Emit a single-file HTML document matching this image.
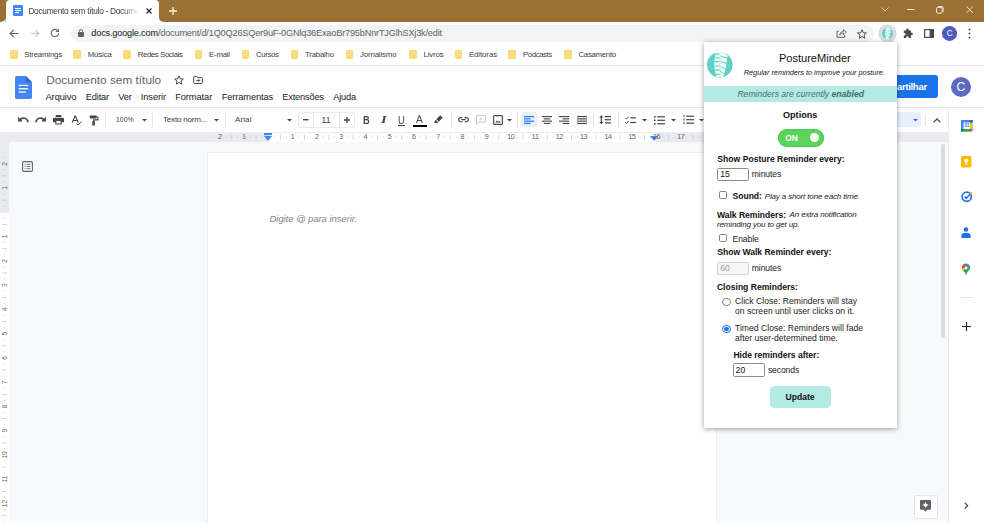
<!DOCTYPE html>
<html lang="pt-BR">
<head>
<meta charset="utf-8">
<title>Documento sem título - Documentos Google</title>
<style>
*{box-sizing:border-box;margin:0;padding:0}
html,body{width:984px;height:523px;overflow:hidden;background:#fff}
body{position:relative;font-family:"Liberation Sans",sans-serif;color:#202124}
.a{position:absolute}
.t{position:absolute;white-space:nowrap;line-height:1}
svg{position:absolute;overflow:visible}
/* chrome frame */
#tabstrip{left:0;top:0;width:984px;height:22px;background:#9a7034}
#tab{left:5.500px;top:0;width:153.500px;height:22px;background:#fff;border-radius:4px 4px 0 0}
#navbar{left:0;top:22px;width:984px;height:22px;background:#fff}
#omni{left:70.500px;top:24.600px;width:803px;height:17.800px;border-radius:9px;background:#f1f3f4}
#bm{left:0;top:44px;width:984px;height:21.500px;background:#fff;border-bottom:1px solid #e3e5e8}
.fold{position:absolute;top:50px;width:7.500px;height:8.800px;background:#f9dd7d;border-radius:1px;margin-left:-.7px}
/* docs */
#dochead{left:0;top:65.500px;width:984px;height:43px;background:#fff}
#doctb{left:0;top:107px;width:984px;height:25px;background:#fff;border-top:1px solid #e3e5e8}
#ruler{left:0;top:132px;width:948px;height:10px;background:#f8f9fa}
#canvas{left:0;top:142px;width:948px;height:381px;background:#f8f9fa}
#page{left:207px;top:151.500px;width:510px;height:380px;background:#fff;border:1px solid #eceef0}
#side{left:948px;top:108px;width:36px;height:415px;background:#fff;border-left:1px solid #e8eaed}
.sep{position:absolute;top:113px;width:1px;height:13.500px;background:#e4e6e9}
/* popup */
#pop{left:704px;top:42.300px;width:193.300px;height:385.400px;background:#fff;box-shadow:0 1px 5px rgba(0,0,0,.38);}
</style>
</head>
<body>
<!-- ===== Browser chrome ===== -->
<div class="a" id="tabstrip"></div>
<div class="a" id="tab"></div>
<svg style="left:0;top:0" width="170" height="22" viewBox="0 0 170 22"><path d="M159 22 V17 Q159 21.700 163.500 21.700 V22 Z M5.500 22 V17 Q5.500 21.700 1 21.700 V22 Z" fill="#fff"/></svg>
<svg style="left:13px;top:5px" width="10" height="11" viewBox="0 0 10 11"><rect width="10" height="11" rx="1.3" fill="#4285f4"/><rect x="2" y="3" width="6" height="1.1" fill="#fff"/><rect x="2" y="5" width="6" height="1.1" fill="#fff"/><rect x="2" y="7" width="4" height="1.1" fill="#fff"/></svg>
<svg style="left:146px;top:8px" width="6" height="6" viewBox="0 0 6 6"><path d="M.5 .5 L5.5 5.5 M5.5 .5 L.5 5.5" stroke="#202124" stroke-width="1.1" fill="none"/></svg>
<svg style="left:169px;top:7px" width="8" height="8" viewBox="0 0 8 8"><path d="M4 0 V8 M0 4 H8" stroke="#fdeed6" stroke-width="1.400" fill="none"/></svg>
<!-- window controls -->
<svg style="left:881px;top:7px" width="8" height="5" viewBox="0 0 8 5"><path d="M.5 .5 L4 4 L7.500 .5" stroke="#d9c7a6" stroke-width="1" fill="none"/></svg>
<svg style="left:906.700px;top:9px" width="7.500" height="2" viewBox="0 0 7.500 2"><path d="M0 .5 H7.500" stroke="#f3eadb" stroke-width="1"/></svg>
<svg style="left:935.600px;top:5.600px" width="7.600" height="7.600" viewBox="0 0 8 8"><rect x=".5" y="1.5" width="6" height="6" rx="1.2" stroke="#f3eadb" fill="none" stroke-width="1"/><path d="M2 .5 H6.300 Q7.500 .5 7.500 1.700 V6" stroke="#f3eadb" fill="none" stroke-width="1"/></svg>
<svg style="left:965.600px;top:6px" width="7.400" height="7.400" viewBox="0 0 8 8"><path d="M.5 .5 L7.500 7.500 M7.500 .5 L.5 7.500" stroke="#f3eadb" stroke-width="1" fill="none"/></svg>

<div class="a" id="navbar"></div>
<div class="a" id="omni"></div>
<!-- nav icons -->
<svg style="left:9px;top:29px" width="10" height="9" viewBox="0 0 10 9"><path d="M9.500 4.500 H1.200 M4.800 .8 L1.100 4.500 L4.800 8.200" stroke="#5f6368" stroke-width="1.1" fill="none"/></svg>
<svg style="left:30px;top:29px" width="10" height="9" viewBox="0 0 10 9"><path d="M.5 4.500 H8.800 M5.200 .8 L8.900 4.500 L5.200 8.200" stroke="#c4c7ca" stroke-width="1.1" fill="none"/></svg>
<svg style="left:50px;top:28px" width="10" height="10" viewBox="0 0 10 10"><path d="M8.600 5.200 A3.700 3.700 0 1 1 7.400 2.300" stroke="#5f6368" stroke-width="1.1" fill="none"/><path d="M9 .6 V3.900 H5.700 Z" fill="#5f6368"/></svg>
<svg style="left:78px;top:29px" width="6" height="8" viewBox="0 0 6 8"><rect x="0" y="3" width="6" height="5" rx=".8" fill="#5f6368"/><path d="M1.300 3.200 V2.300 A1.700 1.700 0 0 1 4.700 2.300 V3.200" stroke="#5f6368" stroke-width="1" fill="none"/></svg>
<!-- share / star -->
<svg style="left:836px;top:28px" width="11" height="10" viewBox="0 0 11 10"><path d="M2.800 3.300 H1 V9.300 H8.600 V7.200" stroke="#5f6368" stroke-width="1" fill="none"/><path d="M3.600 7 Q4 3.600 7.400 3.400 V1.500 L10.300 4.200 L7.400 6.800 V5 Q5 5 3.600 7 Z" stroke="#5f6368" stroke-width=".9" fill="none" stroke-linejoin="round"/></svg>
<svg style="left:857px;top:29px" width="10" height="10" viewBox="0 0 10 10"><path d="M5 .8 L6.300 3.700 L9.400 4 L7.050 6.100 L7.750 9.200 L5 7.550 L2.250 9.200 L2.950 6.100 L.6 4 L3.700 3.700 Z" stroke="#474a4d" stroke-width="1" fill="none" stroke-linejoin="round"/></svg>
<!-- extension (active) -->
<div class="a" style="left:879px;top:25px;width:17px;height:17px;border-radius:50%;background:#dcdddf;box-shadow:0 0 0 .5px #cfd0d2"></div>
<svg style="left:882px;top:28px" width="11" height="11" viewBox="0 0 26 26"><defs><clipPath id="lc2"><circle cx="13" cy="13" r="13"/></clipPath></defs><circle cx="13" cy="13" r="13" fill="#5dd1c6"/><g clip-path="url(#lc2)"><path d="M9.300 0 Q5 13 10 26 L16.300 26 Q20.200 15 20.800 3.500 Q18.500 1 16.500 0 Z" fill="#effcfa"/><path d="M8.300 6 H12.200 M7.600 12 H12.400 M8 18.400 H12.600 M14.200 6 L20.500 8 M14 12.500 L19.500 15.300 M13.200 19 L17.600 22" stroke="#5dd1c6" stroke-width="1.800" fill="none"/></g></svg>
<!-- puzzle -->
<svg style="left:902px;top:28.300px" width="11" height="11" viewBox="0 0 11 11"><path d="M4.200 1.700 A1.250 1.250 0 0 1 6.700 1.700 V2.400 H9 V4.800 H9.600 A1.250 1.250 0 0 1 9.600 7.300 H9 V10 H6.600 V9.300 A1.150 1.150 0 0 0 4.300 9.300 V10 H1.800 V7.400 H2.300 A1.200 1.200 0 0 0 2.300 5 H1.800 V2.400 H4.200 Z" fill="#494c50"/></svg>
<!-- side panel icon -->
<svg style="left:924px;top:29px" width="10" height="9" viewBox="0 0 10 9"><rect x=".6" y=".6" width="8.800" height="7.800" stroke="#494c50" stroke-width="1.200" fill="none"/><rect x="5.600" y=".6" width="3.800" height="7.800" fill="#494c50"/></svg>
<div class="a" style="left:942.400px;top:26px;width:14.600px;height:14.600px;border-radius:50%;background:#5059bc"></div>
<div class="t" style="left:942.200px;top:29.600px;width:15px;text-align:center;font-size:8.200px;color:#fff">C</div>
<svg style="left:968.200px;top:28px" width="3" height="11" viewBox="0 0 3 11"><circle cx="1.500" cy="1.500" r="1" fill="#494c50"/><circle cx="1.500" cy="5.500" r="1" fill="#494c50"/><circle cx="1.500" cy="9.500" r="1" fill="#494c50"/></svg>

<div class="a" id="bm"></div>
<div class="fold" style="left:11px"></div>
<div class="fold" style="left:74px"></div>
<div class="fold" style="left:124px"></div>
<div class="fold" style="left:195.5px"></div>
<div class="fold" style="left:242.5px"></div>
<div class="fold" style="left:291.5px"></div>
<div class="fold" style="left:346.5px"></div>
<div class="fold" style="left:410px"></div>
<div class="fold" style="left:455.5px"></div>
<div class="fold" style="left:509px"></div>
<div class="fold" style="left:565px"></div>
<div class="t" style="left:24.3px;top:50.5px;font-size:7.8px;letter-spacing:-0.183px;color:#3c4043;">Streamings</div>
<div class="t" style="left:87.7px;top:50.5px;font-size:7.8px;letter-spacing:-0.128px;color:#3c4043;">Música</div>
<div class="t" style="left:137.7px;top:50.5px;font-size:7.8px;letter-spacing:-0.388px;color:#3c4043;">Redes Sociais</div>
<div class="t" style="left:209.0px;top:50.5px;font-size:7.8px;letter-spacing:-0.199px;color:#3c4043;">E-mail</div>
<div class="t" style="left:256.0px;top:50.5px;font-size:7.8px;letter-spacing:-0.364px;color:#3c4043;">Cursos</div>
<div class="t" style="left:305.0px;top:50.5px;font-size:7.8px;letter-spacing:-0.198px;color:#3c4043;">Trabalho</div>
<div class="t" style="left:360.0px;top:50.5px;font-size:7.8px;letter-spacing:-0.127px;color:#3c4043;">Jornalismo</div>
<div class="t" style="left:423.5px;top:50.5px;font-size:7.8px;letter-spacing:-0.148px;color:#3c4043;">Livros</div>
<div class="t" style="left:469.0px;top:50.5px;font-size:7.8px;letter-spacing:-0.081px;color:#3c4043;">Editoras</div>
<div class="t" style="left:523.0px;top:50.5px;font-size:7.8px;letter-spacing:-0.410px;color:#3c4043;">Podcasts</div>
<div class="t" style="left:578.5px;top:50.5px;font-size:7.8px;letter-spacing:-0.279px;color:#3c4043;">Casamento</div>
<div class="t" style="left:28.4px;top:6.9px;font-size:8.4px;letter-spacing:-0.316px;color:#3c4043;width:113px;overflow:hidden;-webkit-mask-image:linear-gradient(90deg,#000 84%,transparent 98%);mask-image:linear-gradient(90deg,#000 84%,transparent 98%);">Documento sem título - Docume<span style="letter-spacing:0">ntos Google</span></div>
<div class="t" style="left:91.3px;top:28.9px;font-size:9.2px;letter-spacing:-0.191px;color:#5f6368;"><span style="color:#202124">docs.google.com</span>/document/d/1Q0Q26SQer9uF-0GNlq36ExaoBr795bNnrTJGlhSXj3k/edit</div>

<!-- ===== Docs ===== -->
<div class="a" id="dochead"></div>
<div class="a" id="doctb"></div>
<div class="a" id="ruler"></div>
<div class="a" id="canvas"></div>
<div class="a" id="page"></div>
<div class="a" id="side"></div>
<svg style="left:14.600px;top:75.500px" width="17" height="23" viewBox="0 0 17 23"><path d="M1.800 0 H10.800 L17 6.200 V21.200 Q17 23 15.200 23 H1.800 Q0 23 0 21.200 V1.800 Q0 0 1.800 0 Z" fill="#4285f4"/><path d="M10.800 0 L17 6.200 H12.300 Q10.800 6.200 10.800 4.700 Z" fill="#2b62cf"/><rect x="3.700" y="8.800" width="9.400" height="1.300" fill="#fff"/><rect x="3.700" y="12.100" width="9.400" height="1.300" fill="#fff"/><rect x="3.700" y="15.400" width="7.100" height="1.300" fill="#fff"/></svg>
<svg style="left:174.00px;top:75.30px" width="10" height="10" viewBox="0 0 10 10"><path d="M5 .9 L6.250 3.800 L9.300 4.050 L7 6.100 L7.700 9.100 L5 7.500 L2.300 9.100 L3 6.100 L.7 4.050 L3.750 3.800 Z" stroke="#444746" stroke-width="1" fill="none" stroke-linejoin="round"/></svg>
<svg style="left:192.90px;top:76.20px" width="10" height="8" viewBox="0 0 10 8"><path d="M.6 1.400 Q.6 .6 1.400 .6 H3.800 L4.800 1.700 H8.600 Q9.400 1.700 9.400 2.500 V6.600 Q9.400 7.400 8.600 7.400 H1.400 Q.6 7.400 .6 6.600 Z" stroke="#444746" stroke-width="1" fill="none"/><path d="M3.200 4.500 H6.600 M5.300 3.100 L6.700 4.500 L5.300 5.900" stroke="#444746" stroke-width=".9" fill="none"/></svg>
<svg style="left:17.70px;top:117.00px" width="11" height="6" viewBox="0 0 11 6"><path d="M.3 .3 V4.200 H4.200 L2.700 2.700 Q5 1 7.400 2 Q9 2.800 9.600 5.200 L10.800 4.800 Q10 1.800 7.700 .9 Q4.500 -.3 1.800 1.800 Z" fill="#444746" stroke="#444746" stroke-width=".5"/></svg>
<svg style="left:35.30px;top:117.00px" width="11" height="6" viewBox="0 0 11 6"><path d="M10.700 .3 V4.200 H6.800 L8.300 2.700 Q6 1 3.600 2 Q2 2.800 1.400 5.200 L.2 4.800 Q1 1.800 3.300 .9 Q6.500 -.3 9.200 1.800 Z" fill="#444746" stroke="#444746" stroke-width=".5"/></svg>
<svg style="left:53.00px;top:115.25px" width="11" height="9.5" viewBox="0 0 11 9.5"><path d="M2.700 0 H8.300 V2 H2.700 Z M1.300 2.700 H9.700 Q11 2.700 11 4 V7.300 H8.700 V9.500 H2.300 V7.300 H0 V4 Q0 2.700 1.300 2.700 Z M3.400 6 V8.400 H7.600 V6 Z" fill="#444746" fill-rule="evenodd"/></svg>
<svg style="left:70.90px;top:114.50px" width="11" height="11" viewBox="0 0 11 11"><path d="M3.600 .6 L.6 7.600 H1.900 L2.600 5.900 H5.800 L6.500 7.600 H7.800 L4.800 .6 Z M3 4.900 L4.200 1.900 L5.400 4.900 Z" fill="#444746" fill-rule="evenodd"/><path d="M5.400 8.600 L7 10.100 L10.400 6.600" stroke="#444746" stroke-width="1" fill="none"/></svg>
<svg style="left:88.80px;top:114.50px" width="10" height="11" viewBox="0 0 10 11"><path d="M.8 .6 H7.400 V1.500 H9.400 V5.400 H5.200 V6.300 H5.900 V10.400 H3.300 V6.300 H4 V4.300 H8.300 V2.600 H7.400 V3.600 H.8 Z" fill="#444746"/></svg>
<div class="sep" style="left:104.7px"></div>
<div class="sep" style="left:152.0px"></div>
<div class="sep" style="left:224.9px"></div>
<div class="sep" style="left:451.0px"></div>
<div class="sep" style="left:516.5px"></div>
<div class="sep" style="left:593.1px"></div>
<div class="sep" style="left:617.8px"></div>
<div class="sep" style="left:924.8px"></div>
<svg style="left:142.00px;top:119.00px" width="5" height="2.6" viewBox="0 0 5 2.6"><path d="M0 0 H5 L2.500 2.600 Z" fill="#444746"/></svg>
<svg style="left:214.00px;top:119.00px" width="5" height="2.6" viewBox="0 0 5 2.6"><path d="M0 0 H5 L2.500 2.600 Z" fill="#444746"/></svg>
<svg style="left:286.80px;top:119.00px" width="5" height="2.6" viewBox="0 0 5 2.6"><path d="M0 0 H5 L2.500 2.600 Z" fill="#444746"/></svg>
<svg style="left:506.50px;top:119.00px" width="5" height="2.6" viewBox="0 0 5 2.6"><path d="M0 0 H5 L2.500 2.600 Z" fill="#444746"/></svg>
<svg style="left:641.50px;top:119.00px" width="5" height="2.6" viewBox="0 0 5 2.6"><path d="M0 0 H5 L2.500 2.600 Z" fill="#444746"/></svg>
<svg style="left:670.80px;top:119.00px" width="5" height="2.6" viewBox="0 0 5 2.6"><path d="M0 0 H5 L2.500 2.600 Z" fill="#444746"/></svg>
<svg style="left:699.00px;top:119.00px" width="5" height="2.6" viewBox="0 0 5 2.6"><path d="M0 0 H5 L2.500 2.600 Z" fill="#444746"/></svg>
<div class="a" style="left:297.800px;top:112px;width:57.200px;height:15.500px;border:1px solid #e8eaed;border-radius:2px"></div>
<div class="a" style="left:313.300px;top:112px;width:1px;height:15.500px;background:#e9ebee"></div>
<div class="a" style="left:339.300px;top:112px;width:1px;height:15.500px;background:#e9ebee"></div>
<svg style="left:303.25px;top:119.30px" width="5.5" height="1.4" viewBox="0 0 5.5 1.4"><rect width="5.500" height="1.400" fill="#444746"/></svg>
<svg style="left:343.50px;top:117.00px" width="6" height="6" viewBox="0 0 6 6"><path d="M3 0 V6 M0 3 H6" stroke="#444746" stroke-width="1.300"/></svg>
<div class="a" style="left:413.200px;top:125.200px;width:14px;height:2.200px;background:#000"></div>
<svg style="left:434.10px;top:115.10px" width="9" height="9" viewBox="0 0 9 9"><path d="M6.200 .3 L8.700 2.800 L4.800 6.700 L2.300 4.200 Z M1.900 4.900 L4.100 7.100 L3.200 8 H.4 V6.400 Z" fill="#444746"/></svg>
<svg style="left:458.10px;top:117.30px" width="11" height="5.4" viewBox="0 0 11 5.4"><path d="M4.400 .65 H2.700 A2.050 2.050 0 0 0 2.700 4.750 H4.400 M6.600 .65 H8.300 A2.050 2.050 0 0 1 8.300 4.750 H6.600 M3.400 2.700 H7.600" stroke="#444746" stroke-width="1.200" fill="none"/></svg>
<svg style="left:475.80px;top:115.30px" width="10" height="10" viewBox="0 0 10 10"><path d="M.6 .6 H9.400 V7.200 H3 L.6 9.400 Z" stroke="#c6c8cb" stroke-width="1" fill="none" stroke-linejoin="round"/><path d="M5 2.300 V5.500 M3.400 3.900 H6.600" stroke="#c6c8cb" stroke-width=".9"/></svg>
<svg style="left:492.60px;top:115.00px" width="10" height="10" viewBox="0 0 10 10"><rect x=".6" y=".6" width="8.800" height="8.800" rx="1" stroke="#444746" stroke-width="1.100" fill="none"/><path d="M2.200 7.600 L4 5.400 L5.200 6.800 L6.400 5.700 L7.800 7.600 Z" fill="#444746"/></svg>
<div class="a" style="left:521.200px;top:112px;width:15.400px;height:15.400px;border-radius:2px;background:#e8f0fe"></div>
<svg style="left:523.90px;top:115.95px" width="10" height="8.1" viewBox="0 0 10 8.1"><rect x="0.0" y="0.0" width="10" height="1.150" fill="#1a73e8"/><rect x="0.0" y="2.3" width="6.5" height="1.150" fill="#1a73e8"/><rect x="0.0" y="4.6" width="10" height="1.150" fill="#1a73e8"/><rect x="0.0" y="6.9" width="6.5" height="1.150" fill="#1a73e8"/></svg>
<svg style="left:542.20px;top:115.95px" width="10" height="8.1" viewBox="0 0 10 8.1"><rect x="0.0" y="0.0" width="10" height="1.150" fill="#444746"/><rect x="1.8" y="2.3" width="6.5" height="1.150" fill="#444746"/><rect x="0.0" y="4.6" width="10" height="1.150" fill="#444746"/><rect x="1.8" y="6.9" width="6.5" height="1.150" fill="#444746"/></svg>
<svg style="left:559.40px;top:115.95px" width="10" height="8.1" viewBox="0 0 10 8.1"><rect x="0.0" y="0.0" width="10" height="1.150" fill="#444746"/><rect x="3.5" y="2.3" width="6.5" height="1.150" fill="#444746"/><rect x="0.0" y="4.6" width="10" height="1.150" fill="#444746"/><rect x="3.5" y="6.9" width="6.5" height="1.150" fill="#444746"/></svg>
<svg style="left:576.80px;top:115.95px" width="10" height="8.1" viewBox="0 0 10 8.1"><rect x="0.0" y="0.0" width="10" height="1.150" fill="#444746"/><rect x="0.0" y="2.3" width="10" height="1.150" fill="#444746"/><rect x="0.0" y="4.6" width="10" height="1.150" fill="#444746"/><rect x="0.0" y="6.9" width="10" height="1.150" fill="#444746"/></svg>
<svg style="left:599.40px;top:115.25px" width="12" height="9.5" viewBox="0 0 12 9.5"><path d="M2.300 .2 L4.400 2.500 H2.900 V7 H4.400 L2.300 9.300 L.2 7 H1.700 V2.500 H.2 Z" fill="#444746"/><rect x="5.800" y="1" width="6.200" height="1.200" fill="#444746"/><rect x="5.800" y="4.150" width="6.200" height="1.200" fill="#444746"/><rect x="5.800" y="7.300" width="6.200" height="1.200" fill="#444746"/></svg>
<svg style="left:625.10px;top:115.50px" width="11" height="9" viewBox="0 0 11 9"><path d="M.3 1.900 L1.500 3.100 L3.700 .6 M.3 6.300 L1.500 7.500 L3.700 5" stroke="#444746" stroke-width="1" fill="none"/><rect x="5.300" y="1.300" width="5.700" height="1.200" fill="#444746"/><rect x="5.300" y="5.900" width="5.700" height="1.200" fill="#444746"/></svg>
<svg style="left:653.50px;top:115.70px" width="11" height="8.6" viewBox="0 0 11 8.6"><rect x="0" y="0" width="1.600" height="1.600" fill="#444746"/><rect x="3.200" y="0.2" width="7.800" height="1.200" fill="#444746"/><rect x="0" y="3.5" width="1.600" height="1.600" fill="#444746"/><rect x="3.200" y="3.7" width="7.800" height="1.200" fill="#444746"/><rect x="0" y="7" width="1.600" height="1.600" fill="#444746"/><rect x="3.200" y="7.2" width="7.800" height="1.200" fill="#444746"/></svg>
<svg style="left:682.90px;top:115.20px" width="11" height="9.6" viewBox="0 0 11 9.6"><rect x=".5" y="0.0" width="1" height="2.200" fill="#444746"/><rect x="3.200" y="0.6000000000000001" width="7.800" height="1.200" fill="#444746"/><rect x=".5" y="3.5" width="1" height="2.200" fill="#444746"/><rect x="3.200" y="4.1" width="7.800" height="1.200" fill="#444746"/><rect x=".5" y="7.0" width="1" height="2.200" fill="#444746"/><rect x="3.200" y="7.6000000000000005" width="7.800" height="1.200" fill="#444746"/></svg>
<div class="a" style="left:880px;top:112px;width:41px;height:15.400px;border-radius:2px;background:#e8f0fe"></div>
<svg style="left:913.30px;top:118.70px" width="5" height="2.6" viewBox="0 0 5 2.6"><path d="M0 0 H5 L2.500 2.600 Z" fill="#1a73e8"/></svg>
<svg style="left:932.80px;top:117.50px" width="8" height="5" viewBox="0 0 8 5"><path d="M.6 4.400 L4 1 L7.400 4.400" stroke="#444746" stroke-width="1.300" fill="none"/></svg>
<div class="a" style="left:860px;top:75.300px;width:77.500px;height:23px;border-radius:3px;background:#1a73e8"></div>
<div class="a" style="left:950.700px;top:76.500px;width:20.400px;height:20.400px;border-radius:50%;background:#5c6bc0"></div>
<div class="a" style="left:0;top:132px;width:268.300px;height:10px;background:#e8eaed"></div>
<div class="a" style="left:268.300px;top:132px;width:386.500px;height:10px;background:#fff"></div>
<div class="a" style="left:654.800px;top:132px;width:293.200px;height:10px;background:#e8eaed"></div>
<div class="a" style="left:0;top:131.500px;width:948px;height:1px;background:#eceef1"></div>
<svg style="left:0;top:132px" width="948" height="10" viewBox="0 0 948 10"><rect x="213.19" y="4.500" width=".8" height="1.400" fill="#cdd0d3"/><rect x="225.33" y="4.500" width=".8" height="1.400" fill="#cdd0d3"/><rect x="231.39" y="2.500" width=".8" height="5.400" fill="#cdd0d3"/><rect x="237.46" y="4.500" width=".8" height="1.400" fill="#cdd0d3"/><rect x="249.60" y="4.500" width=".8" height="1.400" fill="#cdd0d3"/><rect x="255.66" y="2.500" width=".8" height="5.400" fill="#cdd0d3"/><rect x="261.73" y="4.500" width=".8" height="1.400" fill="#cdd0d3"/><rect x="273.87" y="4.500" width=".8" height="1.400" fill="#cdd0d3"/><rect x="279.94" y="2.500" width=".8" height="5.400" fill="#cdd0d3"/><rect x="286.00" y="4.500" width=".8" height="1.400" fill="#cdd0d3"/><rect x="298.14" y="4.500" width=".8" height="1.400" fill="#cdd0d3"/><rect x="304.21" y="2.500" width=".8" height="5.400" fill="#cdd0d3"/><rect x="310.27" y="4.500" width=".8" height="1.400" fill="#cdd0d3"/><rect x="322.41" y="4.500" width=".8" height="1.400" fill="#cdd0d3"/><rect x="328.48" y="2.500" width=".8" height="5.400" fill="#cdd0d3"/><rect x="334.54" y="4.500" width=".8" height="1.400" fill="#cdd0d3"/><rect x="346.68" y="4.500" width=".8" height="1.400" fill="#cdd0d3"/><rect x="352.75" y="2.500" width=".8" height="5.400" fill="#cdd0d3"/><rect x="358.81" y="4.500" width=".8" height="1.400" fill="#cdd0d3"/><rect x="370.95" y="4.500" width=".8" height="1.400" fill="#cdd0d3"/><rect x="377.01" y="2.500" width=".8" height="5.400" fill="#cdd0d3"/><rect x="383.08" y="4.500" width=".8" height="1.400" fill="#cdd0d3"/><rect x="395.22" y="4.500" width=".8" height="1.400" fill="#cdd0d3"/><rect x="401.28" y="2.500" width=".8" height="5.400" fill="#cdd0d3"/><rect x="407.35" y="4.500" width=".8" height="1.400" fill="#cdd0d3"/><rect x="419.49" y="4.500" width=".8" height="1.400" fill="#cdd0d3"/><rect x="425.56" y="2.500" width=".8" height="5.400" fill="#cdd0d3"/><rect x="431.62" y="4.500" width=".8" height="1.400" fill="#cdd0d3"/><rect x="443.76" y="4.500" width=".8" height="1.400" fill="#cdd0d3"/><rect x="449.83" y="2.500" width=".8" height="5.400" fill="#cdd0d3"/><rect x="455.89" y="4.500" width=".8" height="1.400" fill="#cdd0d3"/><rect x="468.03" y="4.500" width=".8" height="1.400" fill="#cdd0d3"/><rect x="474.10" y="2.500" width=".8" height="5.400" fill="#cdd0d3"/><rect x="480.16" y="4.500" width=".8" height="1.400" fill="#cdd0d3"/><rect x="492.30" y="4.500" width=".8" height="1.400" fill="#cdd0d3"/><rect x="498.37" y="2.500" width=".8" height="5.400" fill="#cdd0d3"/><rect x="504.43" y="4.500" width=".8" height="1.400" fill="#cdd0d3"/><rect x="516.57" y="4.500" width=".8" height="1.400" fill="#cdd0d3"/><rect x="522.63" y="2.500" width=".8" height="5.400" fill="#cdd0d3"/><rect x="528.70" y="4.500" width=".8" height="1.400" fill="#cdd0d3"/><rect x="540.84" y="4.500" width=".8" height="1.400" fill="#cdd0d3"/><rect x="546.91" y="2.500" width=".8" height="5.400" fill="#cdd0d3"/><rect x="552.97" y="4.500" width=".8" height="1.400" fill="#cdd0d3"/><rect x="565.11" y="4.500" width=".8" height="1.400" fill="#cdd0d3"/><rect x="571.18" y="2.500" width=".8" height="5.400" fill="#cdd0d3"/><rect x="577.24" y="4.500" width=".8" height="1.400" fill="#cdd0d3"/><rect x="589.38" y="4.500" width=".8" height="1.400" fill="#cdd0d3"/><rect x="595.45" y="2.500" width=".8" height="5.400" fill="#cdd0d3"/><rect x="601.51" y="4.500" width=".8" height="1.400" fill="#cdd0d3"/><rect x="613.65" y="4.500" width=".8" height="1.400" fill="#cdd0d3"/><rect x="619.72" y="2.500" width=".8" height="5.400" fill="#cdd0d3"/><rect x="625.78" y="4.500" width=".8" height="1.400" fill="#cdd0d3"/><rect x="637.92" y="4.500" width=".8" height="1.400" fill="#cdd0d3"/><rect x="643.99" y="2.500" width=".8" height="5.400" fill="#cdd0d3"/><rect x="650.05" y="4.500" width=".8" height="1.400" fill="#cdd0d3"/><rect x="662.19" y="4.500" width=".8" height="1.400" fill="#cdd0d3"/><rect x="668.25" y="2.500" width=".8" height="5.400" fill="#cdd0d3"/><rect x="674.32" y="4.500" width=".8" height="1.400" fill="#cdd0d3"/><rect x="686.46" y="4.500" width=".8" height="1.400" fill="#cdd0d3"/><rect x="692.52" y="2.500" width=".8" height="5.400" fill="#cdd0d3"/><rect x="698.59" y="4.500" width=".8" height="1.400" fill="#cdd0d3"/><rect x="710.73" y="4.500" width=".8" height="1.400" fill="#cdd0d3"/></svg>
<svg style="left:264.300px;top:133px" width="8" height="8" viewBox="0 0 8 8"><rect x="0" y="0" width="8" height="2.200" fill="#4285f4"/><path d="M0 2.900 H8 L4 8 Z" fill="#4285f4"/></svg>
<svg style="left:650.400px;top:136px" width="8" height="4.800" viewBox="0 0 8 4.800"><path d="M0 0 H8 L4 4.800 Z" fill="#4285f4"/></svg>
<div class="a" style="left:0;top:142px;width:9px;height:70.500px;background:#e8eaed"></div>
<div class="a" style="left:0;top:212.500px;width:9px;height:310.500px;background:#fff"></div>
<svg style="left:0;top:0" width="9" height="523" viewBox="0 0 9 523"><rect x="3.800" y="157.29" width="1.400" height=".8" fill="#c4c7c5"/><rect x="3.800" y="169.43" width="1.400" height=".8" fill="#c4c7c5"/><rect x="2.300" y="175.50" width="4.400" height=".8" fill="#c4c7c5"/><rect x="3.800" y="181.56" width="1.400" height=".8" fill="#c4c7c5"/><rect x="3.800" y="193.70" width="1.400" height=".8" fill="#c4c7c5"/><rect x="2.300" y="199.77" width="4.400" height=".8" fill="#c4c7c5"/><rect x="3.800" y="205.83" width="1.400" height=".8" fill="#c4c7c5"/><rect x="3.800" y="217.97" width="1.400" height=".8" fill="#c4c7c5"/><rect x="2.300" y="224.03" width="4.400" height=".8" fill="#c4c7c5"/><rect x="3.800" y="230.10" width="1.400" height=".8" fill="#c4c7c5"/><rect x="3.800" y="242.24" width="1.400" height=".8" fill="#c4c7c5"/><rect x="2.300" y="248.31" width="4.400" height=".8" fill="#c4c7c5"/><rect x="3.800" y="254.37" width="1.400" height=".8" fill="#c4c7c5"/><rect x="3.800" y="266.51" width="1.400" height=".8" fill="#c4c7c5"/><rect x="2.300" y="272.58" width="4.400" height=".8" fill="#c4c7c5"/><rect x="3.800" y="278.64" width="1.400" height=".8" fill="#c4c7c5"/><rect x="3.800" y="290.78" width="1.400" height=".8" fill="#c4c7c5"/><rect x="2.300" y="296.85" width="4.400" height=".8" fill="#c4c7c5"/><rect x="3.800" y="302.91" width="1.400" height=".8" fill="#c4c7c5"/><rect x="3.800" y="315.05" width="1.400" height=".8" fill="#c4c7c5"/><rect x="2.300" y="321.12" width="4.400" height=".8" fill="#c4c7c5"/><rect x="3.800" y="327.18" width="1.400" height=".8" fill="#c4c7c5"/><rect x="3.800" y="339.32" width="1.400" height=".8" fill="#c4c7c5"/><rect x="2.300" y="345.38" width="4.400" height=".8" fill="#c4c7c5"/><rect x="3.800" y="351.45" width="1.400" height=".8" fill="#c4c7c5"/><rect x="3.800" y="363.59" width="1.400" height=".8" fill="#c4c7c5"/><rect x="2.300" y="369.66" width="4.400" height=".8" fill="#c4c7c5"/><rect x="3.800" y="375.72" width="1.400" height=".8" fill="#c4c7c5"/><rect x="3.800" y="387.86" width="1.400" height=".8" fill="#c4c7c5"/><rect x="2.300" y="393.93" width="4.400" height=".8" fill="#c4c7c5"/><rect x="3.800" y="399.99" width="1.400" height=".8" fill="#c4c7c5"/><rect x="3.800" y="412.13" width="1.400" height=".8" fill="#c4c7c5"/><rect x="2.300" y="418.20" width="4.400" height=".8" fill="#c4c7c5"/><rect x="3.800" y="424.26" width="1.400" height=".8" fill="#c4c7c5"/><rect x="3.800" y="436.40" width="1.400" height=".8" fill="#c4c7c5"/><rect x="2.300" y="442.47" width="4.400" height=".8" fill="#c4c7c5"/><rect x="3.800" y="448.53" width="1.400" height=".8" fill="#c4c7c5"/><rect x="3.800" y="460.67" width="1.400" height=".8" fill="#c4c7c5"/><rect x="2.300" y="466.74" width="4.400" height=".8" fill="#c4c7c5"/><rect x="3.800" y="472.80" width="1.400" height=".8" fill="#c4c7c5"/><rect x="3.800" y="484.94" width="1.400" height=".8" fill="#c4c7c5"/><rect x="2.300" y="491.01" width="4.400" height=".8" fill="#c4c7c5"/><rect x="3.800" y="497.07" width="1.400" height=".8" fill="#c4c7c5"/><rect x="3.800" y="509.21" width="1.400" height=".8" fill="#c4c7c5"/><rect x="2.300" y="515.27" width="4.400" height=".8" fill="#c4c7c5"/><rect x="3.800" y="521.34" width="1.400" height=".8" fill="#c4c7c5"/></svg>
<svg style="left:22.00px;top:161.00px" width="11" height="11" viewBox="0 0 11 11"><rect x=".6" y=".6" width="9.800" height="9.800" rx="1.200" stroke="#5f6368" stroke-width="1.100" fill="none"/><path d="M2.600 3.300 H3.600 M4.600 3.300 H8.400 M2.600 5.500 H3.600 M4.600 5.500 H8.400 M2.600 7.700 H3.600 M4.600 7.700 H8.400" stroke="#5f6368" stroke-width=".9"/></svg>
<div class="a" style="left:940.600px;top:144px;width:4.800px;height:193.500px;border-radius:2.400px;background:#dadce0"></div>
<div class="a" style="left:914px;top:495px;width:23.700px;height:23.700px;border-radius:2px;background:#fff;border:1px solid #e3e5e8"></div>
<svg style="left:920.10px;top:500.40px" width="11" height="12" viewBox="0 0 11 12"><path d="M1 0 H10 Q11 0 11 1 V8.800 Q11 9.800 10 9.800 H7.300 L5.500 11.800 L3.700 9.800 H1 Q0 9.800 0 8.800 V1 Q0 0 1 0 Z" fill="#5f6368"/><path d="M5.500 1.800 L6.500 4 L8.700 5 L6.500 6 L5.500 8.200 L4.500 6 L2.300 5 L4.500 4 Z" fill="#fff"/></svg>
<svg style="left:964.25px;top:501.65px" width="4.5" height="7.5" viewBox="0 0 4.5 7.5"><path d="M.7 .7 L3.700 3.750 L.7 6.800" stroke="#444746" stroke-width="1.200" fill="none"/></svg>
<svg style="left:960.65px;top:120.05px" width="11.5" height="11.5" viewBox="0 0 11.5 11.5"><rect x="0" y="0" width="11.500" height="11.500" rx="1.200" fill="#4285f4"/><rect x="0" y="0" width="11.500" height="2.500" fill="#4285f4"/><rect x="9" y="2.500" width="2.500" height="6.500" fill="#fbbc04"/><rect x="2.500" y="9" width="6.500" height="2.500" fill="#34a853"/><path d="M9 9 H11.500 L9 11.500 Z" fill="#ea4335"/><rect x="0" y="9" width="2.500" height="2.500" fill="#188038"/><rect x="9" y="0" width="2.500" height="2.500" fill="#1967d2"/><rect x="2.500" y="2.500" width="6.500" height="6.500" fill="#fff"/></svg>
<svg style="left:961.15px;top:155.55px" width="10.5" height="11.5" viewBox="0 0 10.5 11.5"><rect width="10.500" height="11.500" rx="1.400" fill="#fbbc04"/><circle cx="5.250" cy="4.800" r="2.100" fill="#fff"/><rect x="4.100" y="7.400" width="2.300" height="1.200" fill="#fff"/></svg>
<svg style="left:960.65px;top:190.95px" width="11.5" height="11.5" viewBox="0 0 11.5 11.5"><circle cx="5.750" cy="5.750" r="4.600" stroke="#1a73e8" stroke-width="1.700" fill="none"/><path d="M3.600 5.600 L5.300 7.300 L9.800 2.400" stroke="#1a73e8" stroke-width="1.500" fill="none"/><circle cx="9.900" cy="2.100" r="1.300" fill="#fbbc04"/></svg>
<svg style="left:961.40px;top:227.30px" width="10" height="11" viewBox="0 0 10 11"><circle cx="5" cy="2.500" r="2.300" fill="#1a73e8"/><path d="M.4 11 V8.600 Q.4 5.800 5 5.800 Q9.600 5.800 9.600 8.600 V11 Z" fill="#1a73e8"/></svg>
<svg style="left:962.40px;top:263.65px" width="8" height="11.5" viewBox="0 0 8 11.5"><path d="M4 11.500 Q3.600 9 1.200 6.500 A4 4 0 1 1 6.800 6.500 Q4.400 9 4 11.500 Z" fill="#34a853"/><path d="M4 0 A4 4 0 0 1 8 4 L4 4 Z" fill="#4285f4"/><path d="M0 4 A4 4 0 0 1 4 0 L4 4 Z" fill="#ea4335"/><path d="M0 4 L4 4 L1.200 6.500 A4 4 0 0 1 0 4 Z" fill="#fbbc04"/><circle cx="4" cy="4" r="1.400" fill="#fff"/></svg>
<div class="a" style="left:960px;top:297px;width:12.500px;height:1px;background:#e3e5e8"></div>
<svg style="left:962.00px;top:321.90px" width="9" height="9" viewBox="0 0 9 9"><path d="M4.500 0 V9 M0 4.500 H9" stroke="#202124" stroke-width="1.200"/></svg>
<svg style="left:0;top:0" width="9" height="523" viewBox="0 0 9 523" font-family="Liberation Sans, sans-serif" font-size="6.600" fill="#5f6368"><text transform="translate(6.900 163.8) rotate(-90)" text-anchor="middle">2</text><text transform="translate(6.900 188.0) rotate(-90)" text-anchor="middle">1</text><text transform="translate(6.900 236.6) rotate(-90)" text-anchor="middle">1</text><text transform="translate(6.900 260.8) rotate(-90)" text-anchor="middle">2</text><text transform="translate(6.900 285.1) rotate(-90)" text-anchor="middle">3</text><text transform="translate(6.900 309.4) rotate(-90)" text-anchor="middle">4</text><text transform="translate(6.900 333.6) rotate(-90)" text-anchor="middle">5</text><text transform="translate(6.900 357.9) rotate(-90)" text-anchor="middle">6</text><text transform="translate(6.900 382.2) rotate(-90)" text-anchor="middle">7</text><text transform="translate(6.900 406.5) rotate(-90)" text-anchor="middle">8</text><text transform="translate(6.900 430.7) rotate(-90)" text-anchor="middle">9</text><text transform="translate(6.900 455.0) rotate(-90)" text-anchor="middle">10</text><text transform="translate(6.900 479.3) rotate(-90)" text-anchor="middle">11</text><text transform="translate(6.900 503.5) rotate(-90)" text-anchor="middle">12</text></svg>
<svg style="left:960.650px;top:120.050px" width="11.500" height="11.500" viewBox="0 0 11.500 11.500" font-family="Liberation Sans, sans-serif" font-size="4.600" font-weight="bold" fill="#1a73e8"><text x="5.750" y="7.400" text-anchor="middle">31</text></svg>
<div class="t" style="left:46.2px;top:74.8px;font-size:11.8px;letter-spacing:0.013px;color:#5f6368;">Documento sem título</div>
<div class="t" style="left:45.5px;top:92.6px;font-size:9.3px;letter-spacing:-0.082px;color:#202124;">Arquivo</div>
<div class="t" style="left:85.8px;top:92.6px;font-size:9.3px;letter-spacing:-0.190px;color:#202124;">Editar</div>
<div class="t" style="left:118.2px;top:92.6px;font-size:9.3px;letter-spacing:-0.188px;color:#202124;">Ver</div>
<div class="t" style="left:140.8px;top:92.6px;font-size:9.3px;letter-spacing:-0.091px;color:#202124;">Inserir</div>
<div class="t" style="left:175.2px;top:92.6px;font-size:9.3px;letter-spacing:-0.096px;color:#202124;">Formatar</div>
<div class="t" style="left:221.8px;top:92.6px;font-size:9.3px;letter-spacing:-0.138px;color:#202124;">Ferramentas</div>
<div class="t" style="left:282.2px;top:92.6px;font-size:9.3px;letter-spacing:-0.197px;color:#202124;">Extensões</div>
<div class="t" style="left:333.2px;top:92.6px;font-size:9.3px;letter-spacing:-0.174px;color:#202124;">Ajuda</div>
<div class="t" style="left:115.6px;top:116.0px;font-size:8.1px;transform:scaleX(0.860);transform-origin:0 50%;color:#3c4043;">100%</div>
<div class="t" style="left:163.0px;top:116.0px;font-size:8.1px;letter-spacing:-0.223px;color:#3c4043;">Texto norm...</div>
<div class="t" style="left:235.0px;top:116.0px;font-size:8.1px;letter-spacing:0.066px;color:#3c4043;">Arial</div>
<div class="t" style="left:321.6px;top:116.1px;font-size:8.6px;color:#3c4043;">11</div>
<div class="t" style="left:269.5px;top:214.3px;font-size:9.6px;letter-spacing:-0.112px;color:#80868b;font-style:italic;">Digite @ para inserir.</div>
<div class="t" style="left:896.9px;top:81.6px;font-size:9.6px;letter-spacing:-0.324px;color:#fff;font-weight:bold;">artilhar</div>
<div class="t" style="left:956.6px;top:80.9px;font-size:12px;letter-spacing:-0.272px;color:#fff;">C</div>
<div class="t" style="left:217.9px;top:134.2px;font-size:7.1px;letter-spacing:-0.353px;color:#5f6368;">2</div>
<div class="t" style="left:242.1px;top:134.2px;font-size:7.1px;letter-spacing:-0.353px;color:#5f6368;">1</div>
<div class="t" style="left:290.7px;top:134.2px;font-size:7.1px;letter-spacing:-0.353px;color:#5f6368;">1</div>
<div class="t" style="left:314.9px;top:134.2px;font-size:7.1px;letter-spacing:-0.353px;color:#5f6368;">2</div>
<div class="t" style="left:339.2px;top:134.2px;font-size:7.1px;letter-spacing:-0.353px;color:#5f6368;">3</div>
<div class="t" style="left:363.5px;top:134.2px;font-size:7.1px;letter-spacing:-0.353px;color:#5f6368;">4</div>
<div class="t" style="left:387.7px;top:134.2px;font-size:7.1px;letter-spacing:-0.353px;color:#5f6368;">5</div>
<div class="t" style="left:412.0px;top:134.2px;font-size:7.1px;letter-spacing:-0.353px;color:#5f6368;">6</div>
<div class="t" style="left:436.3px;top:134.2px;font-size:7.1px;letter-spacing:-0.353px;color:#5f6368;">7</div>
<div class="t" style="left:460.6px;top:134.2px;font-size:7.1px;letter-spacing:-0.353px;color:#5f6368;">8</div>
<div class="t" style="left:484.8px;top:134.2px;font-size:7.1px;letter-spacing:-0.353px;color:#5f6368;">9</div>
<div class="t" style="left:507.3px;top:134.2px;font-size:7.1px;letter-spacing:-0.460px;color:#5f6368;">10</div>
<div class="t" style="left:531.6px;top:134.2px;font-size:7.1px;letter-spacing:-0.117px;color:#5f6368;">11</div>
<div class="t" style="left:555.8px;top:134.2px;font-size:7.1px;letter-spacing:-0.460px;color:#5f6368;">12</div>
<div class="t" style="left:580.1px;top:134.2px;font-size:7.1px;letter-spacing:-0.460px;color:#5f6368;">13</div>
<div class="t" style="left:604.4px;top:134.2px;font-size:7.1px;letter-spacing:-0.460px;color:#5f6368;">14</div>
<div class="t" style="left:628.6px;top:134.2px;font-size:7.1px;letter-spacing:-0.460px;color:#5f6368;">15</div>
<div class="t" style="left:652.9px;top:134.2px;font-size:7.1px;letter-spacing:-0.460px;color:#5f6368;">16</div>
<div class="t" style="left:677.2px;top:134.2px;font-size:7.1px;letter-spacing:-0.460px;color:#5f6368;">17</div>
<div class="t" style="left:362.9px;top:115.7px;font-size:10.0px;transform:scaleX(0.926);transform-origin:0 50%;color:#444746;font-weight:bold;">B</div>
<div class="t" style="left:381.3px;top:114.4px;font-size:11px;transform:scaleX(1.331);transform-origin:0 50%;color:#444746;font-style:italic;font-weight:bold;font-family:'Liberation Serif',serif;">I</div>
<div class="t" style="left:398.4px;top:115.9px;font-size:10.0px;transform:scaleX(0.954);transform-origin:0 50%;color:#444746;text-decoration:underline;text-underline-offset:.9px;text-decoration-thickness:.9px;">U</div>
<div class="t" style="left:416.4px;top:114.9px;font-size:10.0px;transform:scaleX(1.019);transform-origin:0 50%;color:#444746;">A</div>

<!-- ===== Popup ===== -->
<div class="a" id="pop"></div>
<!-- logo -->
<svg style="left:707.200px;top:52.100px" width="25.600" height="25.600" viewBox="0 0 26 26"><defs><clipPath id="lc"><circle cx="13" cy="13" r="13"/></clipPath></defs><circle cx="13" cy="13" r="13" fill="#5dd1c6"/>
<g clip-path="url(#lc)"><path d="M9.300 0 Q5 13 10 26 L16.300 26 Q20.200 15 20.800 3.500 Q18.500 1 16.500 0 Z" fill="#effcfa"/>
<g stroke="#5dd1c6" fill="none"><path d="M9.300 2.400 H12.400 M8.300 6 H12.200 M7.800 9.800 H12.200 M7.600 14.200 H12.400 M8 18.400 H12.600 M9 22.600 H13" stroke-width="1.100"/><path d="M14.200 4.400 L20.500 6 M14.200 9.600 L20 11.800 M13.900 14.800 L19 17.600 M13.200 19.400 L17.600 22.300" stroke-width="1"/><path d="M13.300 1 Q12.600 13 13.600 25" stroke-width=".7" opacity=".6"/></g></g></svg>
<div class="a" style="left:704px;top:85.500px;width:193.300px;height:16.500px;background:#b3ebe4"></div>
<!-- toggle -->
<div class="a" style="left:777.500px;top:129px;width:46px;height:17.500px;border-radius:9px;background:#5bd45c;box-shadow:inset 0 0 0 1px #52c653"></div>
<div class="a" style="left:810px;top:133.200px;width:9.200px;height:9.200px;border-radius:50%;background:#fff"></div>
<!-- inputs -->
<div class="a" style="left:717.200px;top:167.700px;width:32.200px;height:13.700px;border:1px solid #8a8a8a;border-radius:1.500px;background:#fff"></div>
<div class="a" style="left:719.300px;top:191px;width:7.500px;height:7.500px;border:1px solid #858585;border-radius:1.800px;background:#fff"></div>
<div class="a" style="left:719.300px;top:234px;width:7.500px;height:7.500px;border:1px solid #858585;border-radius:1.800px;background:#fff"></div>
<div class="a" style="left:717.200px;top:261.600px;width:32.200px;height:13px;border:1px solid #d2d2d2;border-radius:1.500px;background:#f6f6f6"></div>
<div class="a" style="left:722.200px;top:297.600px;width:8.600px;height:8.600px;border:1px solid #858585;border-radius:50%;background:#fff"></div>
<div class="a" style="left:722.200px;top:324.500px;width:8.600px;height:8.600px;border:1.100px solid #1a73e8;border-radius:50%;background:#fff"></div>
<div class="a" style="left:724.300px;top:326.600px;width:4.400px;height:4.400px;border-radius:50%;background:#1a73e8"></div>
<div class="a" style="left:732.600px;top:363.200px;width:32.400px;height:13.700px;border:1px solid #8a8a8a;border-radius:1.500px;background:#fff"></div>
<div class="a" style="left:770px;top:385.800px;width:60.600px;height:22.500px;border-radius:4.500px;background:#b3ebe4"></div>
<div class="t" style="left:778.9px;top:53.2px;font-size:11.1px;letter-spacing:-0.021px;color:#111;">PostureMinder</div>
<div class="t" style="left:743.7px;top:68.8px;font-size:7.4px;letter-spacing:-0.030px;color:#222;font-style:italic;">Regular reminders to improve your posture.</div>
<div class="t" style="left:737.4px;top:89.7px;font-size:8.6px;letter-spacing:0.001px;color:#3f6e69;font-style:italic;">Reminders are currently <b>enabled</b></div>
<div class="t" style="left:783.0px;top:111.0px;font-size:9.1px;letter-spacing:-0.009px;color:#111;font-weight:bold;">Options</div>
<div class="t" style="left:785.3px;top:133.7px;font-size:8.4px;letter-spacing:-0.042px;color:#fff;font-weight:bold;">ON</div>
<div class="t" style="left:717.3px;top:155.1px;font-size:8.6px;letter-spacing:0.009px;color:#111;font-weight:bold;">Show Posture Reminder every:</div>
<div class="t" style="left:720.3px;top:170.0px;font-size:8.6px;letter-spacing:0.025px;color:#111;">15</div>
<div class="t" style="left:751.8px;top:169.8px;font-size:8.6px;letter-spacing:-0.107px;color:#222;">minutes</div>
<div class="t" style="left:732.6px;top:192.1px;font-size:8.6px;letter-spacing:-0.053px;color:#111;font-weight:bold;">Sound:</div>
<div class="t" style="left:764.7px;top:192.6px;font-size:8.0px;letter-spacing:-0.144px;color:#222;font-style:italic;">Play a short tone each time.</div>
<div class="t" style="left:716.9px;top:210.5px;font-size:8.6px;letter-spacing:-0.021px;color:#111;font-weight:bold;">Walk Reminders:</div>
<div class="t" style="left:789.6px;top:210.9px;font-size:8.0px;letter-spacing:-0.154px;color:#222;font-style:italic;">An extra notification</div>
<div class="t" style="left:716.9px;top:220.9px;font-size:8.0px;letter-spacing:-0.134px;color:#222;font-style:italic;">reminding you to get up.</div>
<div class="t" style="left:732.6px;top:234.6px;font-size:8.6px;letter-spacing:-0.121px;color:#222;">Enable</div>
<div class="t" style="left:717.3px;top:248.3px;font-size:8.6px;letter-spacing:-0.028px;color:#111;font-weight:bold;">Show Walk Reminder every:</div>
<div class="t" style="left:720.3px;top:264.1px;font-size:8.6px;letter-spacing:0.025px;color:#9a9a9a;">60</div>
<div class="t" style="left:751.8px;top:264.1px;font-size:8.6px;letter-spacing:-0.107px;color:#222;">minutes</div>
<div class="t" style="left:716.9px;top:283.2px;font-size:8.6px;letter-spacing:-0.005px;color:#111;font-weight:bold;">Closing Reminders:</div>
<div class="t" style="left:735.0px;top:296.9px;font-size:8.6px;letter-spacing:0.007px;color:#222;">Click Close: Reminders will stay</div>
<div class="t" style="left:735.0px;top:306.9px;font-size:8.6px;letter-spacing:-0.007px;color:#222;">on screen until user clicks on it.</div>
<div class="t" style="left:735.0px;top:323.8px;font-size:8.6px;letter-spacing:0.010px;color:#222;">Timed Close: Reminders will fade</div>
<div class="t" style="left:735.0px;top:333.8px;font-size:8.6px;letter-spacing:-0.014px;color:#222;">after user-determined time.</div>
<div class="t" style="left:733.4px;top:350.7px;font-size:8.6px;letter-spacing:-0.027px;color:#111;font-weight:bold;">Hide reminders after:</div>
<div class="t" style="left:735.6px;top:366.2px;font-size:8.6px;letter-spacing:0.025px;color:#111;">20</div>
<div class="t" style="left:767.9px;top:366.1px;font-size:8.6px;letter-spacing:-0.110px;color:#222;">seconds</div>
<div class="t" style="left:785.6px;top:392.6px;font-size:8.6px;letter-spacing:-0.044px;color:#111;font-weight:bold;">Update</div>

</body>
</html>
